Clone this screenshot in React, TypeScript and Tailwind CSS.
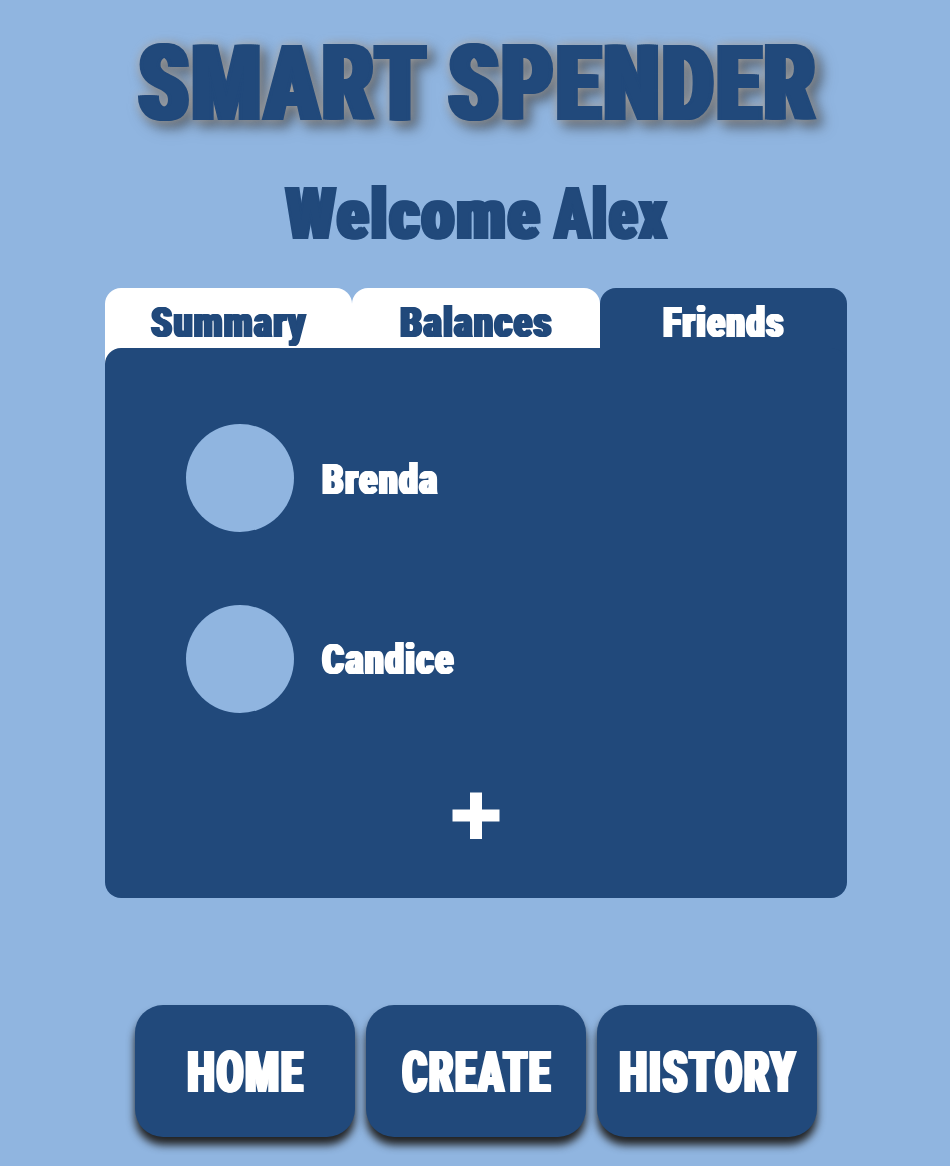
import { useLayoutEffect, useRef, useState } from "react";

/** One word in heavy condensed lettering, squeezed to the width of its box. */
function Word({ text, className }: { text: string; className: string }) {
  const box = useRef<HTMLSpanElement>(null);
  const ink = useRef<HTMLSpanElement>(null);
  const [scale, setScale] = useState(1);

  useLayoutEffect(() => {
    if (box.current && ink.current) {
      setScale(box.current.clientWidth / ink.current.offsetWidth);
    }
  }, [text]);

  return (
    <span ref={box} className={`block whitespace-nowrap leading-none ${className}`}>
      <span
        ref={ink}
        className="inline-block origin-left pl-[0.045em] align-top tracking-[0.06em] [text-shadow:0.025em_0,-0.025em_0,0.05em_0,-0.05em_0]"
        style={{ transform: `scaleX(${scale})` }}
      >
        {text}
      </span>
    </span>
  );
}

const tabs = [
  { label: "Summary", width: "w-[157px]", active: false },
  { label: "Balances", width: "w-[154px]", active: false },
  { label: "Friends", width: "w-[123px]", active: true },
];

const friends = [
  { name: "Brenda", width: "w-[118px]" },
  { name: "Candice", width: "w-[134px]" },
];

const actions = [
  { label: "HOME", width: "w-[119px]" },
  { label: "CREATE", width: "w-[151px]" },
  { label: "HISTORY", width: "w-[179px]" },
];

export default function App() {
  return (
    <main className="flex h-[1166px] w-[950px] flex-col items-center overflow-hidden bg-[#90b5e0] font-['Roboto','Liberation_Sans',sans-serif] font-black text-[#21497b]">
      <h1 className="ml-[5px] mt-[31px] flex h-[106px] gap-[17px] text-[106px] [filter:drop-shadow(0_0_5px_rgba(185,178,170,0.8))_drop-shadow(6px_6px_6px_rgba(50,50,50,0.65))]">
        <Word text="SMART" className="w-[293px]" />
        <Word text="SPENDER" className="w-[373px]" />
      </h1>

      <h2 className="ml-[2px] mt-[42px] flex h-[72px] gap-[11px] text-[72px]">
        <Word text="Welcome" className="w-[258px]" />
        <Word text="Alex" className="w-[116px]" />
      </h2>

      <section className="ml-[2px] mt-[37px] flex w-[742.5px] flex-col">
        <div className="grid h-[60px] grid-cols-3">
          {tabs.map((tab) => (
            <button
              key={tab.label}
              className={`flex h-[76px] justify-center rounded-t-[16px] pt-[12.5px] text-[43px] ${
                tab.active ? "bg-[#21497b] text-white" : "bg-white"
              }`}
            >
              <Word text={tab.label} className={tab.width} />
            </button>
          ))}
        </div>
        <div className="relative flex h-[550px] flex-col items-center rounded-[16px] bg-[#21497b] pt-[76.4px] text-white">
          <ul className="flex w-full flex-col gap-[72.5px] pl-[81px]">
            {friends.map((friend) => (
              <li key={friend.name} className="flex items-center gap-[27px]">
                <span className="size-[108px] rounded-full bg-[#90b5e0]" />
                <span className="pt-[2px] text-[43px]">
                  <Word text={friend.name} className={friend.width} />
                </span>
              </li>
            ))}
          </ul>
          <button aria-label="Add friend" className="mt-[79px]">
            <svg width="48" height="47" viewBox="0 0 48 47" fill="currentColor">
              <path d="M18 0.5h12v17h17.5v12H30V47H18V29.5H0.5v-12H18z" />
            </svg>
          </button>
        </div>
      </section>

      <nav className="ml-[2px] mt-[107px] flex gap-[11px] text-[58px] text-white">
        {actions.map((action) => (
          <button
            key={action.label}
            className="flex h-[132px] w-[220px] items-center justify-center rounded-[28px] bg-[#21497b] pt-px shadow-[0_8px_8px_#222]"
          >
            <Word text={action.label} className={action.width} />
          </button>
        ))}
      </nav>
    </main>
  );
}
